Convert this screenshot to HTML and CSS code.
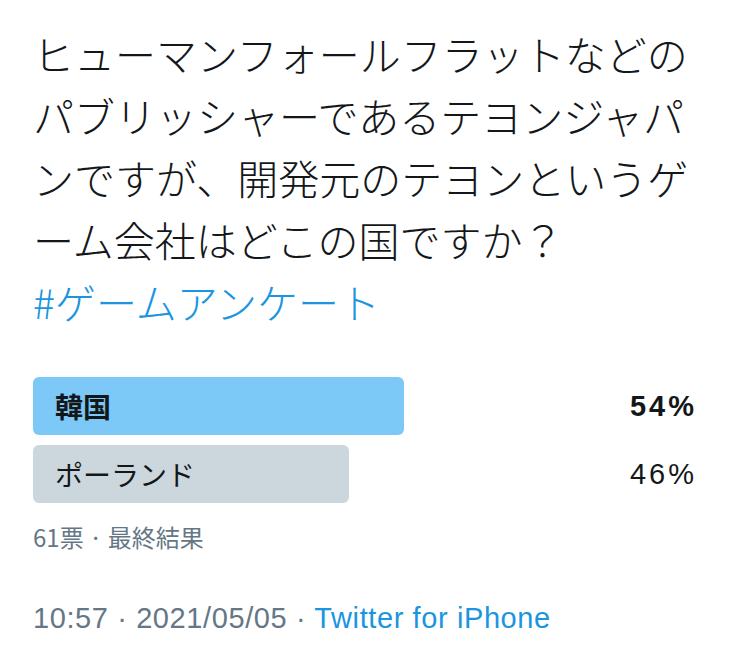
FILE: index.html
```
<!DOCTYPE html>
<html lang="ja">
<head>
<meta charset="utf-8">
<link rel="stylesheet" href="styles.css">
</head>
<body>
<main class="tweet">
  <p class="text">ヒューマンフォールフラットなどの<br>パブリッシャーであるテヨンジャパ<br>ンですが、開発元のテヨンというゲ<br>ーム会社はどこの国ですか？<br><a class="tag">#ゲームアンケート</a></p>
  <section class="poll">
    <div class="row">
      <div class="bar win" style="width:371px"><span class="label">韓国</span></div>
      <span class="pct win-pct">54%</span>
    </div>
    <div class="row">
      <div class="bar" style="width:316px"><span class="label">ポーランド</span></div>
      <span class="pct">46%</span>
    </div>
    <div class="meta">61票 · 最終結果</div>
  </section>
  <footer class="foot">10:57 · 2021/05/05 · <a class="src">Twitter for iPhone</a></footer>
</main>
</body>
</html>
```
FILE: styles.css
```
html, body {
  margin: 0;
  padding: 0;
  background: #ffffff;
}
.tweet {
  width: 662px;
  padding: 22px 0 0 33px;
  font-family: "Noto Sans CJK JP", "Liberation Sans", sans-serif;
  color: #14171a;
}
.text {
  margin: 0;
  font-size: 41px;
  line-height: 62px;
  font-weight: 300;
  white-space: nowrap;
}
.tag {
  color: #1b95e0;
}
.poll {
  margin-top: 45px;
  display: flex;
  flex-direction: column;
  gap: 10px;
}
.row {
  display: flex;
  align-items: center;
  justify-content: space-between;
}
.bar {
  height: 58px;
  background: #ccd6dd;
  border-radius: 6px;
  display: flex;
  align-items: center;
  padding-left: 22px;
  box-sizing: border-box;
}
.bar.win {
  background: #7cc8f7;
}
.label {
  font-size: 28px;
  white-space: nowrap;
}
.win .label {
  font-weight: 700;
}
.pct {
  font-family: "Liberation Sans", sans-serif;
  font-size: 29px;
  letter-spacing: 3px;
  margin-right: -2px;
}
.win-pct {
  font-weight: 700;
}
.meta {
  margin-top: 6px;
  font-size: 24px;
  line-height: 36px;
  color: #657786;
}
.foot {
  margin-top: 47px;
  font-family: "Liberation Sans", sans-serif;
  font-size: 29px;
  letter-spacing: 0.6px;
  color: #657786;
}
.src {
  color: #1b95e0;
}
```
